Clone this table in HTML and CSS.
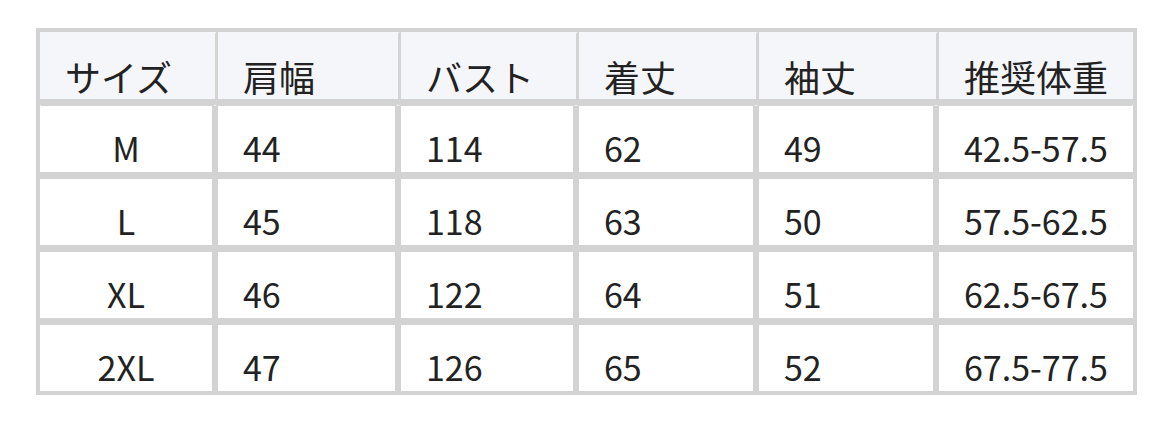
FILE: index.html
```html
<!DOCTYPE html>
<html lang="ja">
<head>
<meta charset="utf-8">
<title>サイズ表</title>
<link rel="stylesheet" href="styles.css">
</head>
<body>
<table class="size-table">
  <colgroup>
    <col class="c1"><col class="c2"><col class="c3"><col class="c4"><col class="c5"><col class="c6">
  </colgroup>
  <thead>
    <tr><th>サイズ</th><th>肩幅</th><th>バスト</th><th>着丈</th><th>袖丈</th><th>推奨体重</th></tr>
  </thead>
  <tbody>
    <tr><td>M</td><td>44</td><td>114</td><td>62</td><td>49</td><td>42.5-57.5</td></tr>
    <tr><td>L</td><td>45</td><td>118</td><td>63</td><td>50</td><td>57.5-62.5</td></tr>
    <tr><td>XL</td><td>46</td><td>122</td><td>64</td><td>51</td><td>62.5-67.5</td></tr>
    <tr><td>2XL</td><td>47</td><td>126</td><td>65</td><td>52</td><td>67.5-77.5</td></tr>
  </tbody>
</table>
</body>
</html>
```
FILE: styles.css
```css
html, body {
  margin: 0;
  padding: 0;
  background: #ffffff;
}
body {
  padding: 28px 0 0 36px;
  font-family: "Noto Sans CJK JP", "Noto Sans", sans-serif;
  color: #222222;
}
.size-table {
  border-collapse: separate;
  border-spacing: 0;
  border: 4px solid #d3d3d3;
  table-layout: fixed;
  width: 1101px;
  font-size: 34px;
  line-height: 40px;
}
.c1 { width: 175px; }
.c2 { width: 183px; }
.c3 { width: 178px; }
.c4 { width: 180px; }
.c5 { width: 180px; }
.c6 { width: 197px; }
.size-table th,
.size-table td {
  box-sizing: border-box;
  padding-left: 25px;
  padding-right: 0;
  text-align: left;
  font-weight: 400;
  white-space: nowrap;
  border: 0 solid #d3d3d3;
}
.size-table th {
  background: #f5f6fa;
  font-size: 36px;
  padding-top: 24px;
  padding-bottom: 3px;
  border-bottom-width: 7px;
  border-radius: 2px;
}
.size-table th + th {
  border-left-width: 3px;
}
.size-table td {
  background: #ffffff;
  padding-top: 22px;
  padding-bottom: 4px;
  border-bottom-width: 7px;
}
.size-table tbody tr:last-child td {
  border-bottom-width: 0;
}
.size-table td + td {
  border-left-width: 3px;
}
.size-table td:not(:last-child) {
  border-right-width: 3px;
}
.size-table td:first-child {
  text-align: center;
  padding-left: 0;
}
```
